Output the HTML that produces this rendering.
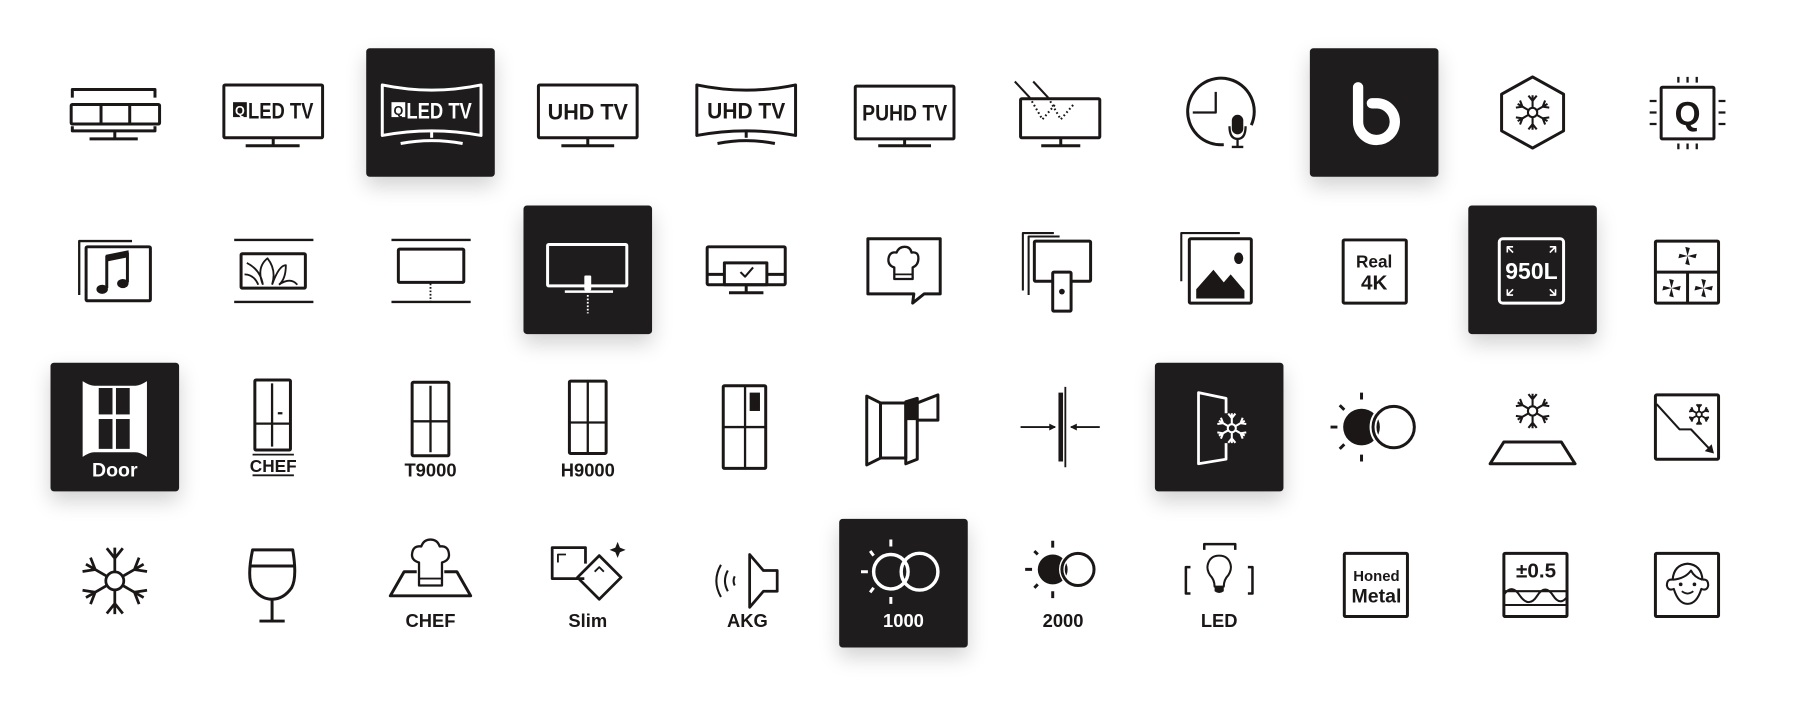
<!DOCTYPE html>
<html><head><meta charset="utf-8"><style>
html,body{margin:0;padding:0;background:#fff;width:1800px;height:703px;overflow:hidden}
#st{position:absolute;left:0;top:0;width:1568px;height:612px;transform:scale(1.148);transform-origin:0 0}
svg.c{position:absolute;width:112px;height:112px;overflow:visible;color:#1b1717}
svg.d{background:#1e1c1c;border-radius:3px;box-shadow:0 8px 18px rgba(0,0,0,.18);color:#fff}
svg text{font-family:"Liberation Sans",sans-serif;font-weight:bold;fill:currentColor;stroke:none}
svg .s{fill:none;stroke:currentColor;stroke-width:2.6;stroke-linejoin:round}
svg .f{fill:currentColor;stroke:none}
</style></head><body><div id="st">
<svg width="0" height="0" style="position:absolute"><defs>
<g id="arm"><path vector-effect="non-scaling-stroke" d="M0,-0.28 V-1 M-0.24,-0.98 L0,-0.68 L0.24,-0.98" fill="none" stroke="currentColor"/></g>
<g id="sf"><circle vector-effect="non-scaling-stroke" r="0.27" fill="none" stroke="currentColor"/>
<use href="#arm"/><use href="#arm" transform="rotate(60)"/><use href="#arm" transform="rotate(120)"/><use href="#arm" transform="rotate(180)"/><use href="#arm" transform="rotate(240)"/><use href="#arm" transform="rotate(300)"/></g>
</defs></svg>

<!-- ROW 1 -->
<svg class="c" style="left:44px;top:42px" viewBox="-56 -56 112 112"><g class="s">
<path d="M-37,-13 V-20 H35 V-13"/><rect x="-38" y="-7" width="77" height="17" rx="1"/><path d="M-12,-7 V10 M13,-7 V10"/><path d="M-37,12 V16 H35 V12"/><path d="M0,16 V22 M-22,23 H20"/></g></svg>

<svg class="c" style="left:181px;top:42px" viewBox="-56 -56 112 112"><g class="s">
<rect x="-42" y="-24" width="86" height="46" rx="1"/><path d="M1,22 V28 M-23,29 H24"/></g>
<rect class="f" x="-34" y="-9" width="12" height="13"/><text x="-28" y="2" font-size="11" text-anchor="middle" style="fill:#fff">Q</text>
<text x="-21" y="5" font-size="19" textLength="57" lengthAdjust="spacingAndGlyphs">LED TV</text></svg>

<svg class="c d" style="left:319px;top:42px" viewBox="-56 -56 112 112"><g class="s">
<path d="M-42,-24 Q1,-15 44,-24 V20 Q1,12 -42,20 Z"/><path d="M1,16 V22 M-26,27 Q1,22 28,27"/></g>
<rect class="f" x="-34" y="-9" width="12" height="13"/><text x="-28" y="2" font-size="11" text-anchor="middle" style="fill:#1e1c1c">Q</text>
<text x="-21" y="5" font-size="19" textLength="57" lengthAdjust="spacingAndGlyphs">LED TV</text></svg>

<svg class="c" style="left:456px;top:42px" viewBox="-56 -56 112 112"><g class="s">
<rect x="-43" y="-24" width="86" height="46" rx="1"/><path d="M0,22 V28 M-23,29 H23"/></g>
<text x="-35" y="6" font-size="19" textLength="70" lengthAdjust="spacingAndGlyphs">UHD TV</text></svg>

<svg class="c" style="left:594px;top:42px" viewBox="-56 -56 112 112"><g class="s">
<path d="M-43,-24 Q0,-15 43,-24 V20 Q0,12 -43,20 Z"/><path d="M0,16 V22 M-25,27 Q0,22 25,27"/></g>
<text x="-34" y="5" font-size="19" textLength="68" lengthAdjust="spacingAndGlyphs">UHD TV</text></svg>

<svg class="c" style="left:731px;top:42px" viewBox="-56 -56 112 112"><g class="s">
<rect x="-42" y="-23" width="86" height="46" rx="1"/><path d="M1,23 V28 M-22,29 H24"/></g>
<text x="-36" y="7" font-size="19" textLength="74" lengthAdjust="spacingAndGlyphs">PUHD TV</text></svg>

<svg class="c" style="left:869px;top:42px" viewBox="-56 -56 112 112"><g class="s">
<rect x="-36" y="-12" width="69" height="34" rx="1"/><path d="M-1,22 V28 M-18,29 H16"/>
<path d="M-41,-27 L-28,-13 M-25,-27 L-12,-13" stroke-width="1.8"/>
<path d="M-28,-13 L-17,6 L-5,-8 M-12,-13 L-1,6 L11,-8" stroke-width="1.8" stroke-dasharray="1.5 2.2"/></g></svg>

<svg class="c" style="left:1006px;top:42px" viewBox="-56 -56 112 112"><g class="s">
<path d="M4,28 A29,29 0 1 1 28,11"/><path d="M-3,-18 V0 H-23" stroke-width="2"/>
<path d="M9,12 Q9,23 16,23 Q23,23 23,12 M16,23 V30 M11,30 H21" stroke-width="2"/></g>
<rect class="f" x="11" y="2" width="10" height="17" rx="5"/></svg>

<svg class="c d" style="left:1141px;top:42px" viewBox="-56 -56 112 112">
<path d="M-14,-22 V8 A16,16 0 1 0 3,-8 H-2" fill="none" stroke="#fff" stroke-width="9" stroke-linecap="round" stroke-linejoin="round"/></svg>

<svg class="c" style="left:1279px;top:42px" viewBox="-56 -56 112 112"><g class="s">
<path d="M0,-31 L27,-16 V16 L0,31 L-27,16 V-16 Z"/></g>
<use href="#sf" transform="translate(0,0) scale(15)" stroke-width="1.8"/></svg>

<svg class="c" style="left:1414px;top:42px" viewBox="-56 -56 112 112"><g class="s">
<rect x="-23" y="-22" width="46" height="45" rx="1"/>
<path d="M-8,-31 V-26 M0,-31 V-26 M8,-31 V-26 M-8,27 V32 M0,27 V32 M8,27 V32 M-33,-10 H-27 M-33,0 H-27 M-33,10 H-27 M27,-10 H33 M27,0 H33 M27,10 H33" stroke-width="2"/></g>
<text x="0" y="11" font-size="29" text-anchor="middle">Q</text></svg>

<!-- ROW 2 -->
<svg class="c" style="left:44px;top:179px" viewBox="-56 -56 112 112"><g class="s">
<rect x="-25" y="-20" width="56" height="47" rx="1"/><path d="M-31,22 V-25 H15" stroke-width="2"/></g>
<path class="f" d="M-8,-13 L12,-17 V-11 L-8,-7 Z"/><path d="M-7,-12 V16 M11,-15 V11" class="s" stroke-width="2.4"/>
<ellipse class="f" cx="-11" cy="17" rx="5" ry="4"/><ellipse class="f" cx="7" cy="12" rx="5" ry="4"/></svg>

<svg class="c" style="left:181px;top:179px" viewBox="-56 -56 112 112"><g class="s">
<path d="M-33,-26 H36 M-33,28 H36" stroke-width="2"/><rect x="-27" y="-14" width="56" height="30" rx="1"/>
<path d="M-24,4 Q-16,4 -12,13 M-22,-6 Q-10,0 -8,13 M-8,13 Q-14,-2 -4,-10 Q4,0 0,13 M0,13 Q6,-4 12,-4 Q12,8 6,13 M6,13 Q16,6 22,13" stroke-width="1.6"/></g></svg>

<svg class="c" style="left:319px;top:179px" viewBox="-56 -56 112 112"><g class="s">
<path d="M-34,-26 H35 M-34,28 H35" stroke-width="2"/><rect x="-28" y="-18" width="57" height="29" rx="1"/>
<path d="M0,12 V28" stroke-width="1.6" stroke-dasharray="1.5 1.5"/></g></svg>

<svg class="c d" style="left:456px;top:179px" viewBox="-56 -56 112 112"><g class="s">
<rect x="-35" y="-22" width="69" height="36" rx="1"/><path d="M-20,19 H22" stroke-width="2.2"/>
<path d="M0,22 V38" stroke-width="1.6" stroke-dasharray="1.5 1.5"/></g>
<rect class="f" x="-3" y="5" width="6" height="13" rx="1"/></svg>

<svg class="c" style="left:594px;top:179px" viewBox="-56 -56 112 112"><g class="s">
<rect x="-34" y="-20" width="68" height="33" rx="1"/><rect x="-19" y="-6" width="37" height="19"/>
<path d="M-34,4 H-19 M18,4 H34 M0,13 V19 M-15,20 H15"/><path d="M-5,2 L-1,6 L6,-2" stroke-width="1.8"/></g></svg>

<svg class="c" style="left:731px;top:179px" viewBox="-56 -56 112 112"><g class="s">
<path d="M-31,-27 H32 V21 H18 L8,29 L9,21 H-31 Z"/>
<path d="M-8,-2 Q-14,-4 -13,-10 Q-12,-16 -6,-15 Q-4,-20 1,-20 Q6,-20 7,-15 Q13,-16 13,-10 Q13,-4 8,-2 V8 H-8 Z" stroke-width="2"/><path d="M-8,4 H8" stroke-width="1.6"/></g></svg>

<svg class="c" style="left:869px;top:179px" viewBox="-56 -56 112 112"><g class="s">
<rect x="-24" y="-25" width="49" height="35" rx="1"/><path d="M-34,18 V-32 H-7 M-29,22 V-29 H-2" stroke-width="1.8"/>
<rect x="-8" y="2" width="16" height="34" rx="1" style="fill:#fff"/></g><circle class="f" cx="0" cy="19" r="2.5"/></svg>

<svg class="c" style="left:1006px;top:179px" viewBox="-56 -56 112 112"><g class="s">
<rect x="-26" y="-27" width="54" height="56" rx="1"/><path d="M-33,10 V-32 H18" stroke-width="1.8"/></g>
<ellipse class="f" cx="17" cy="-10" rx="4" ry="5"/><path class="f" d="M-20,25 V17 L-5,0 L4,11 L10,4 L22,18 V25 Z"/></svg>

<svg class="c" style="left:1141px;top:179px" viewBox="-56 -56 112 112"><g class="s">
<rect x="-27" y="-26" width="55" height="55" rx="1"/></g>
<text x="0" y="-2" font-size="15" text-anchor="middle">Real</text>
<text x="0" y="17" font-size="18" text-anchor="middle">4K</text></svg>

<svg class="c d" style="left:1279px;top:179px" viewBox="-56 -56 112 112"><g class="s">
<rect x="-29" y="-27" width="56" height="56" rx="3"/>
<path d="M-22,-20 L-17,-15 M-22,-15 V-20 H-17 M20,-20 L15,-15 M20,-15 V-20 H15 M-22,22 L-17,17 M-22,17 V22 H-17 M20,22 L15,17 M20,17 V22 H15" stroke-width="1.4"/></g>
<text x="-1" y="8" font-size="20" text-anchor="middle">950L</text></svg>

<svg class="c" style="left:1414px;top:179px" viewBox="-56 -56 112 112"><g class="s">
<rect x="-28" y="-25" width="55" height="54" rx="1"/><path d="M-28,2 H27 M0,2 V29"/></g>
<g class="f">
<g transform="translate(0,-12)"><path d="M0,0 L-2,-8 L2,-7 Z M0,0 L8,-2 L7,2 Z M0,0 L2,8 L-2,7 Z M0,0 L-8,2 L-7,-2 Z"/></g>
<g transform="translate(-14,16)"><path d="M0,0 L-2,-8 L2,-7 Z M0,0 L8,-2 L7,2 Z M0,0 L2,8 L-2,7 Z M0,0 L-8,2 L-7,-2 Z"/></g>
<g transform="translate(14,16)"><path d="M0,0 L-2,-8 L2,-7 Z M0,0 L8,-2 L7,2 Z M0,0 L2,8 L-2,7 Z M0,0 L-8,2 L-7,-2 Z"/></g></g></svg>

<!-- ROW 3 -->
<svg class="c d" style="left:44px;top:316px" viewBox="-56 -56 112 112">
<path d="M-28,-40 Q-22,-36 -18,-36 H18 Q22,-36 28,-40 V26 Q22,22 18,22 H-18 Q-22,22 -28,26 Z" fill="#fff"/>
<g fill="#1e1c1c"><rect x="-14" y="-34" width="12" height="23"/><rect x="1" y="-34" width="12" height="23"/><rect x="-14" y="-7" width="12" height="26"/><rect x="1" y="-7" width="12" height="26"/></g>
<text x="0" y="43" font-size="17" text-anchor="middle">Door</text></svg>

<svg class="c" style="left:181px;top:316px" viewBox="-56 -56 112 112"><g class="s">
<rect x="-15" y="-41" width="31" height="61" rx="1"/><path d="M0,-38 V17 M-15,-3 H16 M5,-12 H9" stroke-width="2"/>
<path d="M-17,24 H19 M-17,42 H19" stroke-width="1.6"/></g>
<text x="1" y="39" font-size="15" text-anchor="middle">CHEF</text></svg>

<svg class="c" style="left:319px;top:316px" viewBox="-56 -56 112 112"><g class="s">
<rect x="-16" y="-39" width="32" height="64" rx="1"/><path d="M0,-36 V22 M-16,-5 H16" stroke-width="2"/></g>
<text x="0" y="43" font-size="16" text-anchor="middle">T9000</text></svg>

<svg class="c" style="left:456px;top:316px" viewBox="-56 -56 112 112"><g class="s">
<rect x="-16" y="-40" width="32" height="63" rx="1"/><path d="M0,-40 V23 M-16,-4 H16" stroke-width="2"/></g>
<text x="0" y="43" font-size="16" text-anchor="middle">H9000</text></svg>

<svg class="c" style="left:594px;top:316px" viewBox="-56 -56 112 112"><g class="s">
<rect x="-20" y="-36" width="37" height="72" rx="1"/><path d="M-1,-36 V36 M-20,0 H17" stroke-width="2"/></g>
<rect class="f" x="3" y="-30" width="9" height="16"/></svg>

<svg class="c" style="left:731px;top:316px" viewBox="-56 -56 112 112"><g class="s" stroke-width="2.2">
<path d="M-32,-27 L-20,-21 V27 L-32,33 Z"/><rect x="-20" y="-21" width="22" height="48"/>
<path d="M2,-22 L12,-25 V28 L2,32 Z"/><path d="M12,-21 L30,-28 V-6 H12"/></g>
<path class="f" d="M2,-22 L12,-25 V-6 H2 Z"/></svg>

<svg class="c" style="left:869px;top:316px" viewBox="-56 -56 112 112"><g class="s">
<path d="M3,-35 V35" stroke-width="1.6"/><path d="M-36,0 H-6 M33,0 H8" stroke-width="1.6"/></g>
<rect class="f" x="-3" y="-30" width="4" height="60"/>
<path class="f" d="M-5,0 L-11,-3 V3 Z M7,0 L13,-3 V3 Z"/></svg>

<svg class="c d" style="left:1006px;top:316px" viewBox="-56 -56 112 112"><g class="s">
<path d="M6,-12 V-25 L-18,-30 V32 L6,28 V14" stroke-width="2.4"/></g>
<use href="#sf" transform="translate(11,1) scale(13)" stroke-width="1.8"/></svg>

<svg class="c" style="left:1141px;top:316px" viewBox="-56 -56 112 112">
<circle class="f" cx="-11" cy="0" r="16"/>
<circle cx="17" cy="0" r="18" fill="none" stroke="#fff" stroke-width="6"/>
<circle cx="17" cy="0" r="18" class="s"/>
<path class="s" stroke-width="1.8" d="M-11,-30 V-24 M-11,24 V30 M-38,0 H-32 M-30,-19 L-26,-15 M-30,19 L-26,15"/></svg>

<svg class="c" style="left:1279px;top:316px" viewBox="-56 -56 112 112"><g class="s">
<path d="M-25,13 H25 L37,32 H-37 Z"/></g>
<use href="#sf" transform="translate(0,-14) scale(15)" stroke-width="1.8"/></svg>

<svg class="c" style="left:1414px;top:316px" viewBox="-56 -56 112 112"><g class="s">
<rect x="-28" y="-28" width="55" height="56" rx="1"/><path d="M-27,-20 L-7,2 H3 L21,21" stroke-width="1.8"/></g>
<path class="f" d="M23,23 L15,21 L21,15 Z"/>
<use href="#sf" transform="translate(10,-11) scale(9)" stroke-width="1.6"/></svg>

<!-- ROW 4 -->
<svg class="c" style="left:44px;top:452px" viewBox="-56 -56 112 112">
<use href="#sf" transform="translate(0,-2) scale(29)" stroke-width="2.4"/></svg>

<svg class="c" style="left:181px;top:452px" viewBox="-56 -56 112 112"><g class="s">
<path d="M-17,-29 H18 Q22,-5 17,4 Q10,14 0,14 Q-10,14 -17,4 Q-22,-5 -17,-29 Z"/><path d="M-19,-15 H19 M0,14 V33 M-11,33 H11"/></g></svg>

<svg class="c" style="left:319px;top:452px" viewBox="-56 -56 112 112"><g class="s">
<path d="M-12,-10 H-23 L-35,11 H35 L23,-10 H12"/>
<path d="M-10,-18 Q-17,-20 -16,-26 Q-15,-33 -8,-32 Q-6,-38 0,-38 Q6,-38 8,-32 Q15,-33 16,-26 Q17,-20 10,-18 V2 H-10 Z" stroke-width="2"/><path d="M-10,-4 H10" stroke-width="1.6"/></g>
<text x="0" y="38" font-size="16" text-anchor="middle">CHEF</text></svg>

<svg class="c" style="left:456px;top:452px" viewBox="-56 -56 112 112"><g class="s">
<path d="M-3,-4 H-31 V-31 H-2 V-17" stroke-width="2.4"/><path d="M-26,-18 V-25 H-19" stroke-width="1.6"/>
<path d="M10,-24 L29,-5 L10,14 L-9,-5 Z" stroke-width="2.4"/><path d="M6,-10 L10,-14 L14,-10" stroke-width="1.6"/></g>
<path class="f" d="M26,-36 L28,-31 L33,-29 L28,-27 L26,-22 L24,-27 L19,-29 L24,-31 Z"/>
<text x="0" y="38" font-size="16" text-anchor="middle">Slim</text></svg>

<svg class="c" style="left:594px;top:452px" viewBox="-56 -56 112 112"><g class="s">
<path d="M3,-25 L15,-11 H27 V7 H15 L3,21 Z" stroke-width="2.4"/>
<path d="M-22,-16 Q-30,-2 -22,12 M-16,-11 Q-21,-2 -16,7 M-10,-6 Q-12,-2 -10,2" stroke-width="1.8"/></g>
<text x="1" y="38" font-size="16" text-anchor="middle">AKG</text></svg>

<svg class="c d" style="left:731px;top:452px" viewBox="-56 -56 112 112">
<circle cx="-11" cy="-10" r="15" fill="none" stroke="#fff" stroke-width="3"/>
<circle cx="14" cy="-10" r="16" fill="none" stroke="#fff" stroke-width="3"/>
<path class="s" stroke-width="1.8" d="M-11,-38 V-32 M-11,12 V18 M-37,-10 H-31 M-29,-28 L-26,-24 M-29,8 L-26,4"/>
<text x="0" y="38" font-size="16" text-anchor="middle">1000</text></svg>

<svg class="c" style="left:869px;top:452px" viewBox="-56 -56 112 112">
<circle class="f" cx="-8" cy="-12" r="13"/>
<circle cx="14" cy="-12" r="14" fill="none" stroke="#fff" stroke-width="5"/>
<circle cx="14" cy="-12" r="14" class="s" stroke-width="2.2"/>
<path class="s" stroke-width="1.8" d="M-8,-37 V-31 M-8,7 V13 M-32,-12 H-26 M-24,-28 L-21,-25 M-24,4 L-21,1"/>
<text x="1" y="38" font-size="16" text-anchor="middle">2000</text></svg>

<svg class="c" style="left:1006px;top:452px" viewBox="-56 -56 112 112"><g class="s">
<path d="M-13,-29 V-34 H14 V-29 M-25,-14 H-29 V9 H-25 M25,-14 H29 V9 H25" stroke-width="2.2"/>
<path d="M-4,3 Q-4,-3 -8,-7 Q-11,-12 -10,-16 Q-8,-24 0,-24 Q8,-24 10,-16 Q11,-12 8,-7 Q4,-3 4,3 Z" stroke-width="1.8"/></g>
<path class="f" d="M-4,3 H4 V7 Q0,10 -4,7 Z"/>
<text x="0" y="38" font-size="16" text-anchor="middle">LED</text></svg>

<svg class="c" style="left:1141px;top:452px" viewBox="-56 -56 112 112"><g class="s">
<rect x="-26" y="-26" width="55" height="55" rx="1"/></g>
<text x="2" y="-2" font-size="13" text-anchor="middle">Honed</text>
<text x="2" y="17" font-size="17" text-anchor="middle">Metal</text></svg>

<svg class="c" style="left:1279px;top:452px" viewBox="-56 -56 112 112"><g class="s">
<rect x="-25" y="-26" width="55" height="55" rx="1"/><path d="M-25,7 H30 M-25,19 H30" stroke-width="1.8"/>
<path d="M-25,10 Q-18,0 -11,11 Q-3,22 4,11 Q11,0 18,11 Q24,20 30,12" stroke-width="1.8"/></g>
<text x="3" y="-5" font-size="18" text-anchor="middle">±0.5</text></svg>

<svg class="c" style="left:1414px;top:452px" viewBox="-56 -56 112 112"><g class="s">
<rect x="-28" y="-26" width="55" height="55" rx="1"/>
<path d="M-13,-3 Q-12,-16 0,-17 Q12,-16 13,-3 M-13,-3 Q-18,-4 -18,2 Q-17,7 -12,5 Q-8,18 0,18 Q8,18 12,5 Q17,7 18,2 Q18,-4 13,-3 M-13,-3 Q-2,-4 3,-11 Q6,-5 13,-3" stroke-width="1.8"/>
<path d="M-5,7 Q0,11 5,7" stroke-width="1.6"/></g>
<circle class="f" cx="-6" cy="1" r="1.6"/><circle class="f" cx="6" cy="1" r="1.6"/></svg>
</div></body></html>
